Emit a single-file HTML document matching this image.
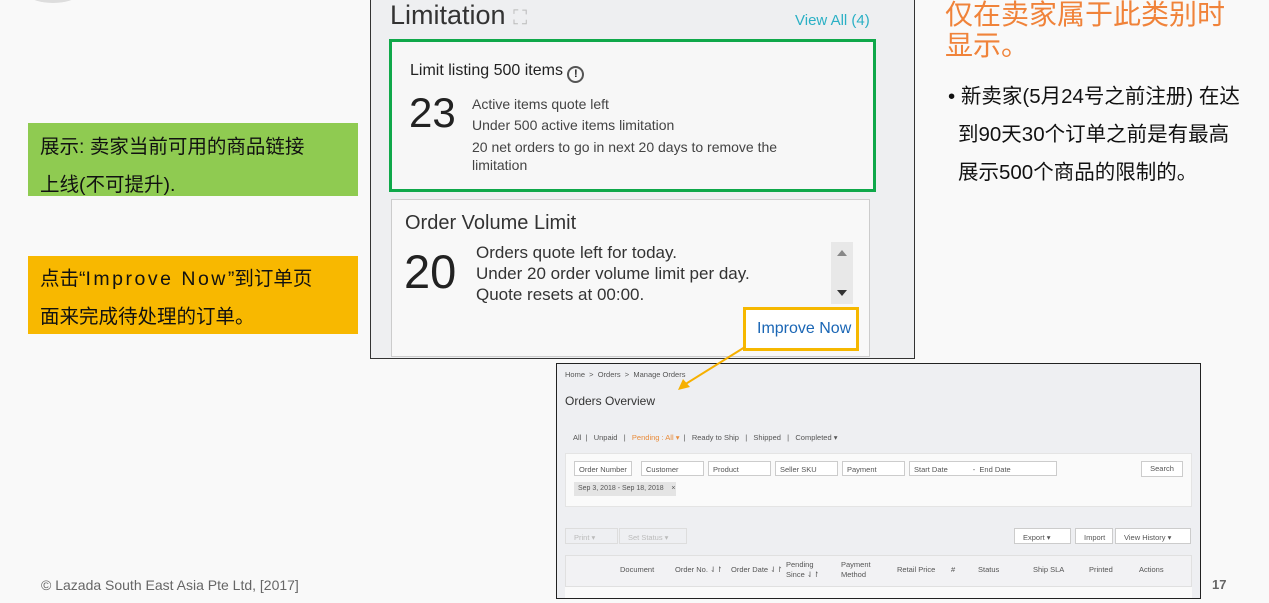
<!DOCTYPE html>
<html><head><meta charset="utf-8"><style>
*{margin:0;padding:0;box-sizing:border-box}
body{width:1269px;height:603px;background:#f9f9f9;position:relative;overflow:hidden;font-family:"Liberation Sans","Noto Sans CJK SC",sans-serif}
.a{position:absolute;white-space:nowrap}
.cn{font-family:"Liberation Sans","Noto Sans CJK SC",sans-serif}
</style></head><body>
<div class="a" style="left:30px;top:-12px;width:46px;height:15px;border-radius:50%;background:#ddd"></div>
<div class="a" style="left:28px;top:123px;width:330px;height:73px;background:#8fcb51"></div>
<div class="a cn" style="left:40px;top:128px;font-size:19.5px;line-height:38px;color:#111">展示: 卖家当前可用的商品链接<br>上线(不可提升).</div>
<div class="a" style="left:28px;top:256px;width:330px;height:78px;background:#f8b800"></div>
<div class="a cn" style="left:40px;top:260px;font-size:19.5px;line-height:38px;color:#111">点击“<span style="letter-spacing:2.5px">Improve Now</span>”到订单页<br>面来完成待处理的订单。</div>

<div class="a cn" style="left:945px;top:-1px;font-size:28px;line-height:31px;color:#f0833a">仅在卖家属于此类别时<br>显示。</div>
<div class="a cn" style="left:948px;top:78px;font-size:20.5px;line-height:38px;color:#111">•&nbsp;新卖家(5月24号之前注册) 在达<br><span style="padding-left:10px">到90天30个订单之前是有最高</span><br><span style="padding-left:10px">展示500个商品的限制的。</span></div>

<!-- screenshot 1 -->
<div class="a" style="left:370px;top:-2px;width:545px;height:361px;background:#eeeff1;border:1px solid #333"></div>
<div class="a" style="left:390px;top:0px;font-size:27px;color:#333">Limitation <span style="color:#bbb;font-size:20px">⛶</span></div>
<div class="a" style="left:795px;top:12px;font-size:15px;color:#2ab0c5">View All (4)</div>
<div class="a" style="left:389px;top:39px;width:487px;height:153px;border:3px solid #0fa84a;background:#f7f7f7"></div>
<div class="a" style="left:410px;top:62px;font-size:16px;color:#222">Limit listing 500 items <span style="display:inline-block;width:17px;height:17px;border:2px solid #555;border-radius:50%;font-size:11px;text-align:center;line-height:13px;font-weight:bold;vertical-align:-2px">!</span></div>
<div class="a" style="left:409px;top:88px;font-size:42px;color:#222;line-height:50px">23</div>
<div class="a" style="left:472px;top:94px;font-size:14px;line-height:21px;color:#444">Active items quote left<br>Under 500 active items limitation</div>
<div class="a" style="left:472px;top:138px;font-size:14px;line-height:18px;color:#444">20 net orders to go in next 20 days to remove the<br>limitation</div>
<div class="a" style="left:391px;top:199px;width:479px;height:158px;border:1px solid #ccc;background:#f8f8f8"></div>
<div class="a" style="left:405px;top:212px;font-size:20px;color:#333">Order Volume Limit</div>
<div class="a" style="left:404px;top:245px;font-size:47px;color:#222;line-height:54px">20</div>
<div class="a" style="left:476px;top:242px;font-size:17px;line-height:21px;color:#333">Orders quote left for today.<br>Under 20 order volume limit per day.<br>Quote resets at 00:00.</div>
<div class="a" style="left:831px;top:242px;width:22px;height:62px;background:#e8e8e8"></div>
<div class="a" style="left:837px;top:250px;border:5px solid transparent;border-bottom:6px solid #888;border-top:0"></div>
<div class="a" style="left:837px;top:290px;border:5px solid transparent;border-top:6px solid #333;border-bottom:0"></div>
<div class="a" style="left:743px;top:307px;width:116px;height:44px;border:3px solid #f6b800;background:#fff"></div>
<div class="a" style="left:757px;top:320px;font-size:16px;color:#1a66b5">Improve Now</div>

<!-- screenshot 2 -->
<div class="a" style="left:556px;top:363px;width:645px;height:236px;background:#eeeff2;border:1px solid #222;overflow:hidden;font-size:7.5px;color:#555">
<div class="a" style="left:8px;top:6px">Home &nbsp;&gt;&nbsp; Orders &nbsp;&gt;&nbsp; Manage Orders</div>
<div class="a" style="left:8px;top:30px;font-size:12px;color:#333">Orders Overview</div>
<div class="a" style="left:16px;top:69px">All &nbsp;|&nbsp;&nbsp; Unpaid &nbsp;&nbsp;|&nbsp;&nbsp; <span style="color:#e88b3a">Pending : All ▾</span> &nbsp;|&nbsp;&nbsp; Ready to Ship &nbsp;&nbsp;|&nbsp;&nbsp; Shipped &nbsp;&nbsp;|&nbsp;&nbsp; Completed ▾</div>
<div class="a" style="left:8px;top:89px;width:627px;height:54px;background:#fafafa;border:1px solid #e4e4e4"></div>
<div class="a" style="left:17px;top:97px;width:58px;height:15px;border:1px solid #ccc;background:#fff;padding:3px 4px">Order Number</div>
<div class="a" style="left:84px;top:97px;width:63px;height:15px;border:1px solid #ccc;background:#fff;padding:3px 4px">Customer</div>
<div class="a" style="left:151px;top:97px;width:63px;height:15px;border:1px solid #ccc;background:#fff;padding:3px 4px">Product</div>
<div class="a" style="left:218px;top:97px;width:63px;height:15px;border:1px solid #ccc;background:#fff;padding:3px 4px">Seller SKU</div>
<div class="a" style="left:285px;top:97px;width:63px;height:15px;border:1px solid #ccc;background:#fff;padding:3px 4px">Payment</div>
<div class="a" style="left:352px;top:97px;width:148px;height:15px;border:1px solid #ccc;background:#fff;padding:3px 4px">Start Date &nbsp;&nbsp;&nbsp;&nbsp;&nbsp;&nbsp;&nbsp;&nbsp;&nbsp;&nbsp;&nbsp;- &nbsp;End Date</div>
<div class="a" style="left:584px;top:97px;width:42px;height:16px;border:1px solid #ccc;background:#fff;text-align:center;line-height:14px">Search</div>
<div class="a" style="left:17px;top:118px;width:102px;height:14px;background:#e4e4e4;padding:3px 4px;font-size:7px">Sep 3, 2018 - Sep 18, 2018 &nbsp;&nbsp;&nbsp;×</div>
<div class="a" style="left:8px;top:164px;width:53px;height:16px;border:1px solid #ddd;color:#bbb;padding:4px 8px">Print ▾</div>
<div class="a" style="left:62px;top:164px;width:68px;height:16px;border:1px solid #ddd;color:#bbb;padding:4px 8px">Set Status ▾</div>
<div class="a" style="left:457px;top:164px;width:57px;height:16px;border:1px solid #ccc;background:#fff;padding:4px 8px">Export ▾</div>
<div class="a" style="left:518px;top:164px;width:38px;height:16px;border:1px solid #ccc;background:#fff;padding:4px 8px">Import</div>
<div class="a" style="left:558px;top:164px;width:76px;height:16px;border:1px solid #ccc;background:#fff;padding:4px 8px">View History ▾</div>
<div class="a" style="left:8px;top:191px;width:627px;height:45px;background:#fafafa;border-top:1px solid #e0e0e0"></div>
<div class="a" style="left:8px;top:191px;width:627px;height:32px;background:#f2f2f4;border:1px solid #e0e0e0"></div>
<div class="a" style="left:63px;top:201px">Document</div>
<div class="a" style="left:118px;top:201px">Order No. ⇃↾</div>
<div class="a" style="left:174px;top:201px">Order Date ⇃↾</div>
<div class="a" style="left:229px;top:196px;line-height:10px">Pending<br>Since ⇃↾</div>
<div class="a" style="left:284px;top:196px;line-height:10px">Payment<br>Method</div>
<div class="a" style="left:340px;top:201px">Retail Price</div>
<div class="a" style="left:394px;top:201px">#</div>
<div class="a" style="left:421px;top:201px">Status</div>
<div class="a" style="left:476px;top:201px">Ship SLA</div>
<div class="a" style="left:532px;top:201px">Printed</div>
<div class="a" style="left:582px;top:201px">Actions</div>
</div>

<svg class="a" style="left:0;top:0" width="1269" height="603"><line x1="745" y1="347" x2="684" y2="385" stroke="#f6b000" stroke-width="2"/><polygon points="678,390 683,379 690,387" fill="#f6b000"/></svg>

<div class="a" style="left:41px;top:577px;font-size:14px;color:#666">© Lazada South East Asia Pte Ltd, [2017]</div>
<div class="a" style="left:1212px;top:577px;font-size:13px;font-weight:bold;color:#666">17</div>
</body></html>
